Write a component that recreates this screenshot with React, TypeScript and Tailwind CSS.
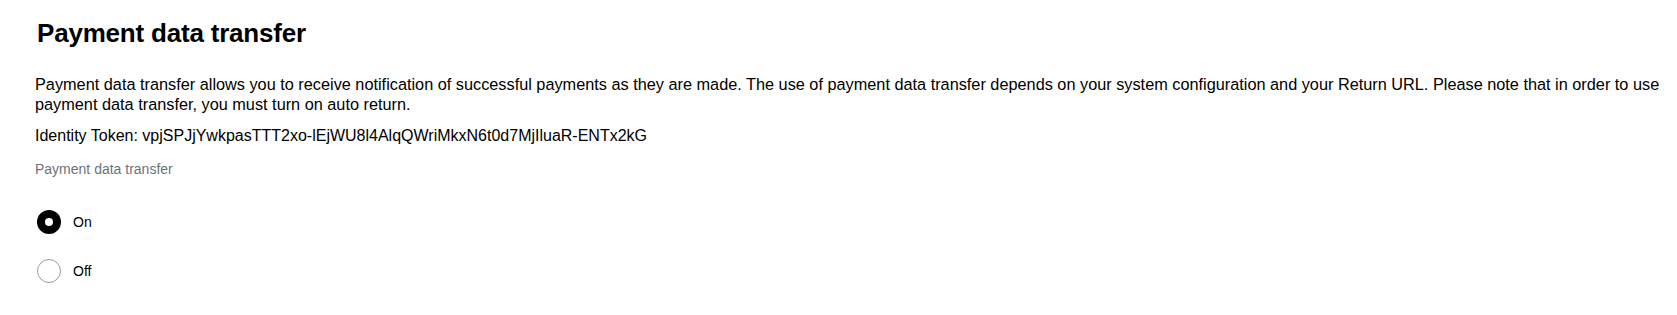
export default function App() {
  return (
    <div
      className="min-h-[315px] bg-white pl-[35px] pr-[6px] pt-[18px] text-black"
      style={{ fontFamily: '"Liberation Sans", Arial, sans-serif' }}
    >
      <h1 className="pl-[2px] text-[26px] font-bold leading-[30px] tracking-[-0.2px]">Payment data transfer</h1>
      <p className="mt-[26px] text-[16.3px] leading-[20px]">
        Payment data transfer allows you to receive notification of successful payments as they are made. The use of payment data transfer depends on your system configuration and your Return URL. Please note that in order to use payment data transfer, you must turn on auto return.
      </p>
      <p className="mt-[11px] text-[16px] leading-[21px]">
        Identity Token: vpjSPJjYwkpasTTT2xo-lEjWU8l4AlqQWriMkxN6t0d7MjIluaR-ENTx2kG
      </p>
      <p className="mt-[14px] text-[14px] leading-[18px] text-[#6c7378]">Payment data transfer</p>
      <div className="mt-[32px] flex flex-col gap-[25px] pl-[2px]">
        <label className="flex items-center gap-[12px]">
          <span className="flex h-[24px] w-[24px] items-center justify-center rounded-full bg-black">
            <span className="h-[8px] w-[8px] rounded-full bg-white" />
          </span>
          <span className="text-[14px] leading-[20px]">On</span>
        </label>
        <label className="flex items-center gap-[12px]">
          <span className="h-[24px] w-[24px] rounded-full border border-[#9a9a9a]" />
          <span className="text-[14px] leading-[20px]">Off</span>
        </label>
      </div>
    </div>
  );
}
